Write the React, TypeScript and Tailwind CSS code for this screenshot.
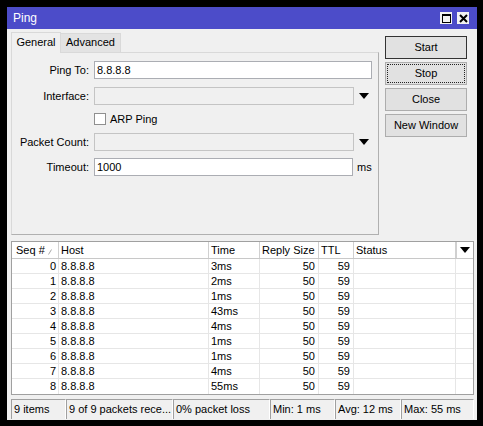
import React from "react";

const rows = [
  { seq: 0, time: "3ms" },
  { seq: 1, time: "2ms" },
  { seq: 2, time: "1ms" },
  { seq: 3, time: "43ms" },
  { seq: 4, time: "4ms" },
  { seq: 5, time: "1ms" },
  { seq: 6, time: "1ms" },
  { seq: 7, time: "4ms" },
  { seq: 8, time: "55ms" },
];

function Arrow() {
  return (
    <svg width="10" height="6" viewBox="0 0 10 6" className="shrink-0">
      <path d="M0 0 H10 L5 6 Z" fill="#000" />
    </svg>
  );
}

function Field({ label, children }: { label: string; children: React.ReactNode }) {
  return (
    <div className="flex h-[18px] items-center">
      <div className="w-[78px] pr-[1px] text-right">{label}</div>
      <div className="ml-[4px] flex items-center">{children}</div>
    </div>
  );
}

function Button({ label, primary, focused }: { label: string; primary?: boolean; focused?: boolean }) {
  return (
    <div
      className={`flex h-[23px] w-[82px] items-center justify-center border bg-[#e1e1e1] ${
        primary ? "border-[#333333]" : "border-[#adadad]"
      }`}
    >
      {focused ? (
        <div className="flex h-[19px] w-[78px] items-center justify-center border border-dotted border-[#222]">{label}</div>
      ) : (
        label
      )}
    </div>
  );
}

export default function App() {
  return (
    <div className="h-[426px] w-[483px] bg-black pl-[7px] pt-[7px] font-['Liberation_Sans',Arial,sans-serif] text-[11px] leading-none text-black">
      <div className="flex h-[413px] w-[470px] flex-col bg-[#f0f0f0]">
        {/* title bar */}
        <div className="flex h-[22px] items-center bg-[#4c4cc9] pl-[6px] pr-[8px] text-white">
          <span className="text-[12px]">Ping</span>
          <div className="ml-auto flex items-center gap-[5px]">
            <div className="flex h-[12px] w-[12px] items-center justify-center bg-[#f2f2f2]">
              <div className="h-[9px] w-[9px] border border-t-2 border-black" />
            </div>
            <div className="flex h-[12px] w-[12px] items-center justify-center bg-[#f2f2f2]">
              <svg width="9" height="9" viewBox="0 0 9 9">
                <path d="M1 1 L8 8 M8 1 L1 8" stroke="#000" strokeWidth="2" />
              </svg>
            </div>
          </div>
        </div>

        {/* top section */}
        <div className="flex pl-[4px]">
          <div className="flex w-[368px] flex-col pt-[2px]">
            <div className="flex h-[21px] items-end">
              <div className="relative z-10 -mb-px flex h-[21px] w-[50px] items-center justify-center border border-b-0 border-[#d9d9d9] bg-[#f0f0f0] pb-[2px]">
                General
              </div>
              <div className="flex h-[19px] w-[60px] items-center justify-center border border-b-0 border-l-0 border-[#d9d9d9] bg-[#e3e3e3] pb-[1px]">
                Advanced
              </div>
            </div>
            <div className="flex h-[183px] flex-col border border-[#d9d9d9] border-b-[#b0b0b0] border-r-[#b0b0b0] pt-[8px]">
              <Field label="Ping To:">
                <div className="flex h-[18px] w-[278px] items-center border border-[#abadb3] bg-white pl-[2px]">8.8.8.8</div>
              </Field>
              <div className="mt-[8px]">
                <Field label="Interface:">
                  <div className="h-[18px] w-[260px] border border-[#c4c4c4] bg-[#f0f0f0]" />
                  <div className="ml-[5px]">
                    <Arrow />
                  </div>
                </Field>
              </div>
              <div className="flex h-[28px] items-center pl-[82px]">
                <div className="h-[12px] w-[12px] border border-[#8f8f8f] bg-white" />
                <span className="ml-[4px]">ARP Ping</span>
              </div>
              <Field label="Packet Count:">
                <div className="h-[18px] w-[260px] border border-[#c4c4c4] bg-[#f0f0f0]" />
                <div className="ml-[5px]">
                  <Arrow />
                </div>
              </Field>
              <div className="mt-[7px]">
                <Field label="Timeout:">
                  <div className="flex h-[18px] w-[259px] items-center border border-[#abadb3] bg-white pl-[2px]">1000</div>
                  <span className="ml-[4px]">ms</span>
                </Field>
              </div>
            </div>
          </div>

          <div className="ml-[6px] flex flex-col gap-[3px] pt-[7px]">
            <Button label="Start" primary />
            <Button label="Stop" focused />
            <Button label="Close" />
            <Button label="New Window" />
          </div>
        </div>

        {/* table */}
        <div className="ml-[4px] mt-[6px] w-[463px] border border-[#a0a0a0] bg-white">
          <div className="flex h-[17px] items-center border-b border-[#c8c8c8]">
            <div className="flex h-full w-[47px] items-center border-r border-[#d0d0d0] pl-[4px]">
              Seq #
              <svg width="4" height="6" viewBox="0 0 4 6" className="ml-[3px] mt-[3px]">
                <path d="M0.5 5.5 L3.5 0.5" stroke="#a8a8a8" strokeWidth="1" />
              </svg>
            </div>
            <div className="flex h-full w-[150px] items-center border-r border-[#d0d0d0] pl-[2px]">Host</div>
            <div className="flex h-full w-[51px] items-center border-r border-[#d0d0d0] pl-[2px]">Time</div>
            <div className="flex h-full w-[59px] items-center border-r border-[#d0d0d0] pl-[2px]">Reply Size</div>
            <div className="flex h-full w-[35px] items-center border-r border-[#d0d0d0] pl-[2px]">TTL</div>
            <div className="flex h-full w-[102px] items-center border-r border-[#d0d0d0] pl-[2px]">Status</div>
            <div className="flex h-full flex-1 items-center justify-center border-l border-[#d0d0d0]">
              <Arrow />
            </div>
          </div>
          {rows.map((r) => (
            <div key={r.seq} className="flex h-[15px] items-center border-b border-[#e6e6e6] last:border-b-0">
              <div className="flex h-full w-[47px] items-center justify-end border-r border-[#e6e6e6] pr-[2px]">{r.seq}</div>
              <div className="flex h-full w-[150px] items-center border-r border-[#e6e6e6] pl-[2px]">8.8.8.8</div>
              <div className="flex h-full w-[51px] items-center border-r border-[#e6e6e6] pl-[2px]">{r.time}</div>
              <div className="flex h-full w-[59px] items-center justify-end border-r border-[#e6e6e6] pr-[3px]">50</div>
              <div className="flex h-full w-[35px] items-center justify-end border-r border-[#e6e6e6] pr-[3px]">59</div>
              <div className="h-full w-[102px] border-r border-[#e6e6e6]" />
              <div className="h-full flex-1" />
            </div>
          ))}
        </div>

        {/* status bar */}
        <div className="ml-[4px] mt-[4px] flex h-[20px] w-[463px]">
          {[
            ["9 items", "w-[55px]"],
            ["9 of 9 packets rece...", "w-[107px]"],
            ["0% packet loss", "w-[97px]"],
            ["Min: 1 ms", "w-[65px]"],
            ["Avg: 12 ms", "w-[66px]"],
            ["Max: 55 ms", "w-[73px]"],
          ].map(([t, w]) => (
            <div
              key={t}
              className={`${w} flex h-full items-center whitespace-nowrap border-l border-t border-r border-[#a0a0a0] border-r-white pl-[2px]`}
            >
              {t}
            </div>
          ))}
        </div>
      </div>
    </div>
  );
}
